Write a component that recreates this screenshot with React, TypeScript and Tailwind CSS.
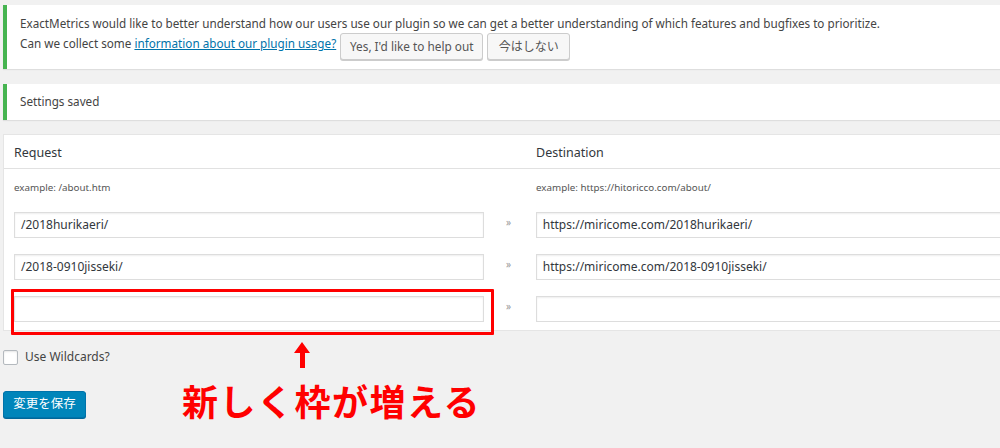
import React from "react";

const font = { fontFamily: '"Noto Sans", "Noto Sans CJK JP", sans-serif' };

function Field({ value, w }: { value: string; w: string }) {
  return (
    <div
      className={`h-[26px] ${w} bg-white border border-[#dddddd] shadow-[inset_0_1px_2px_rgba(0,0,0,0.07)] flex items-center pl-[6px] text-[12px] text-[#32373c]`}
    >
      {value}
    </div>
  );
}

function Row({ req, dest }: { req: string; dest: string }) {
  return (
    <div className="flex items-center h-[26px]">
      <div className="w-[480px] pl-[10px]">
        <Field value={req} w="w-[470px]" />
      </div>
      <div className="w-[52px] pl-[22px] text-[10px] text-[#999] -mt-[6px]">»</div>
      <Field value={dest} w="w-[480px]" />
    </div>
  );
}

export default function App() {
  return (
    <div
      className="relative w-[1000px] h-[448px] overflow-hidden bg-[#f1f1f1] text-[11.7px] text-[#444] pt-[5px] pl-[3px]"
      style={font}
    >
      {/* notice 1 */}
      <div className="bg-white border-l-4 border-[#46b450] shadow-[0_1px_1px_rgba(0,0,0,0.08)] pl-[13px] pt-[9px] pb-[9px]">
        <div className="leading-[19px]">
          ExactMetrics would like to better understand how our users use our plugin so we can get a better understanding of which features and bugfixes to prioritize.
        </div>
        <div className="flex items-start">
          <span className="leading-[19px] pt-[1px]">
            Can we collect some{" "}
            <span className="text-[#0073aa] underline">information about our plugin usage?</span>
          </span>
          <button className="ml-[4px] h-[27px] w-[143px] bg-[#f7f7f7] border border-[#cccccc] rounded-[3px] shadow-[0_1px_0_#cccccc] text-[11.8px] text-[#555] whitespace-nowrap">
            Yes, I'd like to help out
          </button>
          <button className="ml-[4px] h-[27px] w-[83px] bg-[#f7f7f7] border border-[#cccccc] rounded-[3px] shadow-[0_1px_0_#cccccc] text-[12px] text-[#555] whitespace-nowrap">
            今はしない
          </button>
        </div>
      </div>

      {/* notice 2 */}
      <div className="mt-[15px] h-[36px] bg-white border-l-4 border-[#46b450] shadow-[0_1px_1px_rgba(0,0,0,0.08)] pl-[13px] flex items-center">
        Settings saved
      </div>

      {/* table panel */}
      <div className="mt-[14px] w-[1010px] bg-white border border-[#e5e5e5] pb-[8px]">
        <div className="flex items-center h-[34px] pt-[3px] border-b border-[#e1e1e1] text-[12.5px] text-[#32373c]">
          <div className="w-[532px] pl-[10px]">Request</div>
          <div>Destination</div>
        </div>
        <div className="flex items-center h-[38px] text-[9.8px] text-[#555]">
          <div className="w-[532px] pl-[10px]">example: /about.htm</div>
          <div>example: https://hitoricco.com/about/</div>
        </div>
        <div className="flex flex-col gap-[16px] pt-[5px]">
          <Row req="/2018hurikaeri/" dest="https://miricome.com/2018hurikaeri/" />
          <Row req="/2018-0910jisseki/" dest="https://miricome.com/2018-0910jisseki/" />
          <Row req="" dest="" />
        </div>
      </div>

      {/* wildcards */}
      <div className="mt-[17px] flex items-center">
        <div className="w-[15px] h-[15px] bg-white border border-[#b4b9be] rounded-[2px] shadow-[inset_0_1px_2px_rgba(0,0,0,0.1)]" />
        <span className="ml-[7px] text-[12px]">Use Wildcards?</span>
      </div>

      {/* save */}
      <button className="mt-[25px] h-[27px] w-[83px] bg-[#0085ba] border border-[#0073aa] rounded-[3px] shadow-[0_1px_0_#006799] text-white text-[12.5px]">
        変更を保存
      </button>

      {/* annotations */}
      <div className="absolute left-[11px] top-[289px] w-[483px] h-[46px] border-[3px] border-[#ff0000] rounded-[1px]" />
      <svg className="absolute left-[292px] top-[341px]" width="20" height="28" viewBox="0 0 20 28">
        <polygon points="10,1 18,12 13,12 13,27 8,27 8,12 2,12" fill="#ff0000" />
      </svg>
      <div
        className="absolute left-[182px] top-[376px] text-[36px] font-bold text-[#ff0000] tracking-[1.5px] leading-[48px]"
        style={{ fontFamily: '"Noto Sans CJK JP", sans-serif' }}
      >
        新しく枠が増える
      </div>
    </div>
  );
}
